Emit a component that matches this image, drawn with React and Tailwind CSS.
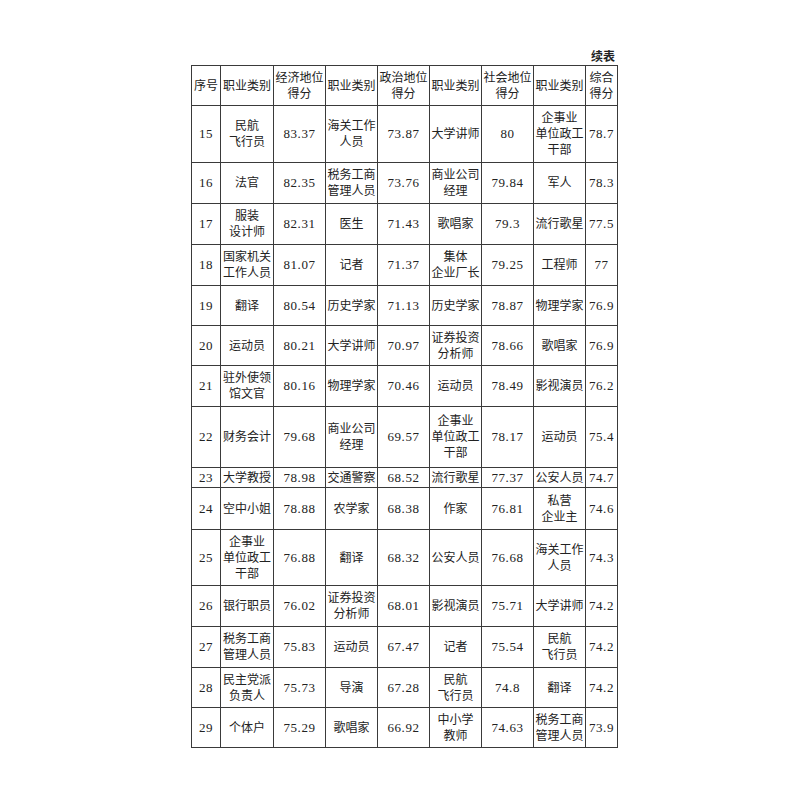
import React from "react";

/* ===== DATA ===== */
const header = [
  ["序号"],
  ["职业类别"],
  ["经济地位", "得分"],
  ["职业类别"],
  ["政治地位", "得分"],
  ["职业类别"],
  ["社会地位", "得分"],
  ["职业类别"],
  ["综合", "得分"],
];

const rows = [
  ["15", "民航|飞行员", "83.37", "海关工作|人员", "73.87", "大学讲师", "80", "企事业|单位政工|干部", "78.7"],
  ["16", "法官", "82.35", "税务工商|管理人员", "73.76", "商业公司|经理", "79.84", "军人", "78.3"],
  ["17", "服装|设计师", "82.31", "医生", "71.43", "歌唱家", "79.3", "流行歌星", "77.5"],
  ["18", "国家机关|工作人员", "81.07", "记者", "71.37", "集体|企业厂长", "79.25", "工程师", "77"],
  ["19", "翻译", "80.54", "历史学家", "71.13", "历史学家", "78.87", "物理学家", "76.9"],
  ["20", "运动员", "80.21", "大学讲师", "70.97", "证券投资|分析师", "78.66", "歌唱家", "76.9"],
  ["21", "驻外使领|馆文官", "80.16", "物理学家", "70.46", "运动员", "78.49", "影视演员", "76.2"],
  ["22", "财务会计", "79.68", "商业公司|经理", "69.57", "企事业|单位政工|干部", "78.17", "运动员", "75.4"],
  ["23", "大学教授", "78.98", "交通警察", "68.52", "流行歌星", "77.37", "公安人员", "74.7"],
  ["24", "空中小姐", "78.88", "农学家", "68.38", "作家", "76.81", "私营|企业主", "74.6"],
  ["25", "企事业|单位政工|干部", "76.88", "翻译", "68.32", "公安人员", "76.68", "海关工作|人员", "74.3"],
  ["26", "银行职员", "76.02", "证券投资|分析师", "68.01", "影视演员", "75.71", "大学讲师", "74.2"],
  ["27", "税务工商|管理人员", "75.83", "运动员", "67.47", "记者", "75.54", "民航|飞行员", "74.2"],
  ["28", "民主党派|负责人", "75.73", "导演", "67.28", "民航|飞行员", "74.8", "翻译", "74.2"],
  ["29", "个体户", "75.29", "歌唱家", "66.92", "中小学|教师", "74.63", "税务工商|管理人员", "73.9"],
];

/* row heights measured off the scan */
const rowH = ["h-[57px]", "h-[41px]", "h-[41px]", "h-[41px]", "h-[40px]", "h-[40px]", "h-[41px]", "h-[61px]", "h-[20px]", "h-[42px]", "h-[56px]", "h-[41px]", "h-[41px]", "h-[40px]", "h-[40px]"];

const colW = ["w-[29px]", "w-[53px]", "w-[52px]", "w-[52px]", "w-[52px]", "w-[52px]", "w-[52px]", "w-[52px]", "w-[32px]"];

function Cell({ text }) {
  const lines = text.split("|");
  const isNum = /^[\d.]+$/.test(text);
  return (
    <td className="border border-[#3a3a3a] p-0 text-center align-middle">
      <div
        className={`flex flex-col items-center leading-[16px] ${
          isNum ? "text-[13px] tracking-[0.6px]" : "text-[12px]"
        }`}
      >
        {lines.map((l, i) => (
          <span key={i} className="whitespace-nowrap">{l}</span>
        ))}
      </div>
    </td>
  );
}

export default function App() {
  return (
    <div className="min-h-[800px] w-[800px] bg-white text-[#222] [font-family:'Liberation_Serif','Noto_Sans_CJK_SC',serif]">
      <div className="ml-[191px] w-[426px] pt-[49px]">
        <div className="flex justify-end pr-[2px] text-[12px] font-bold leading-[16px]">续表</div>
        <table className="table-fixed border-collapse border border-[#2e2e2e] w-[426px]">
          <colgroup>
            {colW.map((w, i) => (
              <col key={i} className={w} />
            ))}
          </colgroup>
          <tbody>
            <tr className="h-[40px]">
              {header.map((h, i) => (
                <Cell key={i} text={h.join("|")} />
              ))}
            </tr>
            {rows.map((r, ri) => (
              <tr key={ri} className={rowH[ri]}>
                {r.map((c, ci) => (
                  <Cell key={ci} text={c} />
                ))}
              </tr>
            ))}
          </tbody>
        </table>
      </div>
    </div>
  );
}
